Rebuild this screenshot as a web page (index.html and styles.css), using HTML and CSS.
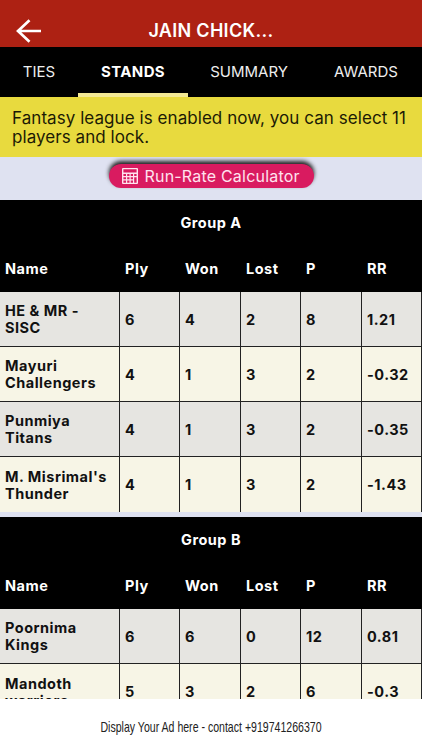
FILE: index.html
```html
<!DOCTYPE html>
<html lang="en">
<head>
    <meta charset="UTF-8">
    <meta name="viewport" content="width=device-width, initial-scale=1.0">
    <title>Stands</title>
    <link rel="stylesheet" href="styles.css">
</head>
<body>
    <header class="header">
        <a href="#" class="back" aria-label="Back">
            <svg width="26" height="24" viewBox="0 0 26 24" fill="none" stroke="#fff" stroke-width="2.7">
                <path d="M13.5 1.2 L2 12 L13.5 22.8 M2 12 H25"/>
            </svg>
        </a>
        <h1 class="title">JAIN CHICK...</h1>
    </header>
    <nav class="tabs">
        <a href="#" class="tab tab-ties"><span>TIES</span></a>
        <a href="#" class="tab tab-stands active"><span>STANDS</span></a>
        <a href="#" class="tab tab-summary"><span>SUMMARY</span></a>
        <a href="#" class="tab tab-awards"><span>AWARDS</span></a>
    </nav>
    <p class="notice">Fantasy league is enabled now, you can select 11<br>players and lock.</p>
    <main class="content">
        <div class="actions">
            <button class="calc-btn">
                <svg width="16" height="16" viewBox="0 0 16 16">
                    <path fill="#ffe3ee" fill-rule="evenodd" d="M1 0H15Q16 0 16 1V15Q16 16 15 16H1Q0 16 0 15V1Q0 0 1 0ZM1.4 1.3V4.5H14.6V1.3ZM1.4 6V8H4V6ZM5.2 6V8H7.5V6ZM8.7 6V8H11V6ZM12.2 6V8H14.6V6ZM1.4 9.2V11.3H4V9.2ZM5.2 9.2V11.3H7.5V9.2ZM8.7 9.2V11.3H11V9.2ZM1.4 12.5V14.7H4V12.5ZM5.2 12.5V14.7H7.5V12.5ZM8.7 12.5V14.7H11V12.5ZM12.2 9.2V14.7H14.6V9.2Z"/>
                </svg>
                <span>Run-Rate Calculator</span>
            </button>
        </div>
        <table class="group">
            <colgroup>
                <col class="col-name"><col class="col-a"><col class="col-b"><col class="col-a"><col class="col-b"><col class="col-a">
            </colgroup>
            <thead>
                <tr><th colspan="6" class="group-name">Group A</th></tr>
                <tr><th>Name</th><th>Ply</th><th>Won</th><th>Lost</th><th>P</th><th>RR</th></tr>
            </thead>
            <tbody>
                <tr><td>HE &amp; MR -<br>SISC</td><td>6</td><td>4</td><td>2</td><td>8</td><td>1.21</td></tr>
                <tr><td>Mayuri<br>Challengers</td><td>4</td><td>1</td><td>3</td><td>2</td><td>-0.32</td></tr>
                <tr><td>Punmiya<br>Titans</td><td>4</td><td>1</td><td>3</td><td>2</td><td>-0.35</td></tr>
                <tr><td>M. Misrimal's<br>Thunder</td><td>4</td><td>1</td><td>3</td><td>2</td><td>-1.43</td></tr>
            </tbody>
        </table>
        <table class="group">
            <colgroup>
                <col class="col-name"><col class="col-a"><col class="col-b"><col class="col-a"><col class="col-b"><col class="col-a">
            </colgroup>
            <thead>
                <tr><th colspan="6" class="group-name">Group B</th></tr>
                <tr><th>Name</th><th>Ply</th><th>Won</th><th>Lost</th><th>P</th><th>RR</th></tr>
            </thead>
            <tbody>
                <tr><td>Poornima<br>Kings</td><td>6</td><td>6</td><td>0</td><td>12</td><td>0.81</td></tr>
                <tr><td>Mandoth<br>warriors</td><td>5</td><td>3</td><td>2</td><td>6</td><td>-0.3</td></tr>
            </tbody>
        </table>
    </main>
    <footer class="ad"><span>Display Your Ad here - contact +919741266370</span></footer>
</body>
</html>
```

FILE: styles.css
```css
* {
    box-sizing: border-box;
}
body {
    display: flex;
    flex-direction: column;
    height: 750px;
    margin: 0;
    overflow: hidden;
    font-family: Inter, "Liberation Sans", sans-serif;
    background-color: #dfe2f1;
}

/* header */
.header {
    display: grid;
    grid-template-columns: 60px 1fr 60px;
    flex: none;
    height: 47px;
    padding-top: 15px;
    background-color: #ad2113;
}
.back {
    height: 32px;
    padding: 4px 0 0 16px;
}
.back svg {
    display: block;
}
.title {
    margin: 0;
    color: #fff;
    font-size: 18px;
    line-height: 32px;
    font-weight: 600;
    text-align: center;
    letter-spacing: 0.3px;
}

/* tabs */
.tabs {
    display: flex;
    flex: none;
    height: 50px;
    background-color: #000;
}
.tab {
    display: flex;
    justify-content: center;
    height: 50px;
    color: #eee;
    font-size: 15px;
    line-height: 49px;
    text-decoration: none;
    border-bottom: 4px solid transparent;
}
.tab-ties {
    width: 78px;
}
.tab-stands {
    width: 110px;
}
.tab-summary {
    width: 122px;
}
.tab-awards {
    width: 112px;
}
.tab.active {
    color: #fff;
    font-weight: 700;
    letter-spacing: 0.4px;
    border-bottom-color: #f3e995;
}

.notice {
    flex: none;
    height: 60px;
    margin: 0;
    padding: 12px 12px 0;
    color: #1c1a05;
    background-color: #e8da3e;
    font-size: 17px;
    line-height: 19px;
    letter-spacing: 0.06px;
    white-space: nowrap;
}

/* standings */
.content {
    flex: 1;
    min-height: 0;
    overflow: hidden;
}
.actions {
    display: flex;
    justify-content: center;
    height: 43px;
    padding-top: 7px;
}
.calc-btn {
    display: flex;
    align-items: center;
    gap: 7px;
    width: 205px;
    height: 24px;
    padding: 0 0 0 13px;
    border: none;
    border-radius: 12px;
    color: #ffe3ee;
    background-color: #d91b60;
    box-shadow: 0 -3px 4px #222;
    font-family: inherit;
    font-size: 16px;
    letter-spacing: 0.2px;
    white-space: nowrap;
}
.group {
    width: 422px;
    margin-bottom: 5px;
    border-collapse: separate;
    border-spacing: 0;
    table-layout: fixed;
    background-color: #000;
    font-size: 14.5px;
    line-height: 17px;
    letter-spacing: 0.5px;
}
.col-name {
    width: 120px;
}
.col-a {
    width: 60px;
}
.col-b {
    width: 61px;
}
.group th {
    height: 46px;
    padding: 0 0 1px 5px;
    color: #fff;
    font-weight: 700;
    text-align: left;
}
.group .group-name {
    padding-left: 0;
    text-align: center;
}
.group td {
    height: 55px;
    padding: 0 0 0 5px;
    color: #111;
    background-color: #f7f5e6;
    border-right: 1px solid #222;
    border-bottom: 1px solid #222;
    font-weight: 700;
    white-space: nowrap;
}
.group tbody tr:nth-child(odd) td {
    background-color: #e6e5e1;
}
.group tbody tr:last-child td {
    border-bottom: none;
}

/* bottom ad strip */
.ad {
    display: flex;
    justify-content: center;
    flex: none;
    height: 51px;
    color: #222;
    background-color: #fff;
    font-family: "Liberation Sans", sans-serif;
    font-size: 15px;
    line-height: 55px;
    white-space: nowrap;
}
.ad span {
    transform: scaleX(0.704);
}
```
